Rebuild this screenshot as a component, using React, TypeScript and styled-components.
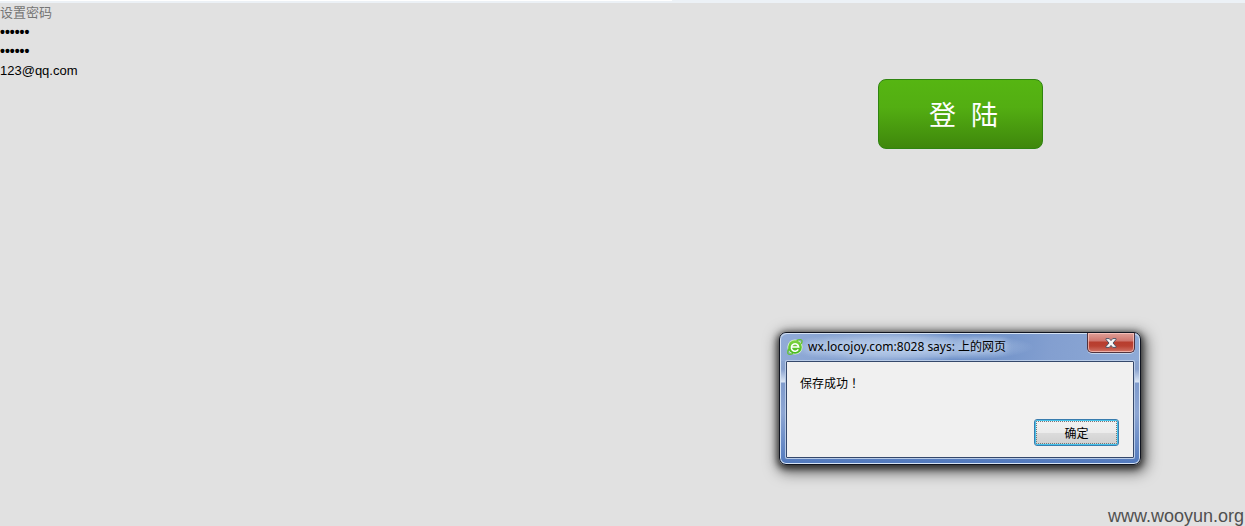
import React, { useState } from 'react';
import styled, { createGlobalStyle } from 'styled-components';

const GlobalStyle = createGlobalStyle`
  *, *::before, *::after { box-sizing: border-box; }
  body {
    margin: 0;
    background: #e1e1e1;
    color: #000;
    font-family: "Liberation Sans", "Noto Sans CJK SC", sans-serif;
    font-size: 13px;
  }
`;

const Page = styled.div`
  position: relative;
  min-height: 100vh;
  display: flex;
  flex-direction: column;
  background: #e1e1e1;
  overflow: hidden;
`;

const TopStrip = styled.div`
  height: 3px;
  background: #ecf1f6;
  &::before {
    content: "";
    display: block;
    width: 54%;
    height: 1px;
    background: #fff;
  }
`;

const Form = styled.form`
  flex: 1;
  display: flex;
  justify-content: space-between;
  align-items: flex-start;
`;

const Fields = styled.div`
  display: flex;
  flex-direction: column;
  width: 200px;
`;

const Heading = styled.label`
  height: 20px;
  line-height: 20px;
  color: #757575;
`;

const Field = styled.input`
  height: 19px;
  padding: 0;
  border: 0;
  outline: 0;
  background: transparent;
  color: #000;
  font: 13px/19px "Liberation Sans", sans-serif;
`;

const PasswordField = styled(Field)`
  font: 700 14px/19px "Liberation Sans", sans-serif;
`;

const LoginButton = styled.button`
  display: flex;
  align-items: center;
  justify-content: center;
  gap: 15px;
  width: 165px;
  height: 70px;
  margin: 76px 202px 0 0;
  padding: 0 0 0 6px;
  border: 1px solid #2f8410;
  border-radius: 8px;
  background: linear-gradient(#56b512, #53ae12 40%, #3f870c);
  color: #fff;
  font: 27px/36px "Noto Sans CJK SC", sans-serif;
`;

const DialogWindow = styled.div`
  position: absolute;
  top: 332px;
  right: 104px;
  width: 362px;
  padding: 0 6px 6px;
  border: 1px solid #10141f;
  border-radius: 7px;
  background: linear-gradient(#8ea8d3 0, #8ea8d3 20px, #87a0cd 36px, #dbe6f4 49px, #7f9bcc 50px, #8da6d3 80px, #5179bd);
  box-shadow: inset 0 0 0 1px #d5e2f3, 0 2px 6px 2px rgba(0, 0, 0, 0.6), 2px 4px 14px 4px rgba(0, 0, 0, 0.5);
`;

const TitleBar = styled.div`
  display: flex;
  align-items: flex-start;
  height: 28px;
  margin: 0 -5px;
  padding: 0 4px 0 6px;
  border-radius: 6px 6px 0 0;
  background:
    radial-gradient(ellipse 125px 16px at 128px 14px, rgba(200, 217, 241, 0.8), rgba(200, 217, 241, 0.5) 60%, transparent),
    linear-gradient(100deg, #91abd7 0, #7d9bcd 30%, #5b81c0 48%, #7092c9 58%, #839fd0 75%, #8eaad6);
  box-shadow: inset 0 1px 0 #d5e2f3;
`;

const Title = styled.h1`
  flex: 1;
  margin: 5px 0 0 5px;
  font: 400 12px/18px "Noto Sans", "Noto Sans CJK SC", sans-serif;
  text-shadow: 0 0 6px #c8d9f1, 0 0 8px #c8d9f1;
  white-space: nowrap;
`;

const BrowserIcon = styled.svg`
  width: 16px;
  height: 16px;
  margin-top: 6px;
`;

const CloseButton = styled.button`
  display: grid;
  place-items: center;
  width: 48px;
  height: 20px;
  padding: 0;
  border: 1px solid #50333e;
  border-top: 0;
  border-radius: 0 0 5px 5px;
  background: linear-gradient(#dfa099, #ce756d 8px, #b73d2e 9px, #b94132 13px, #d17568);
  box-shadow: inset 0 0 0 1px rgba(255, 210, 205, 0.65), 0 1px 0 #c6d5ec;
`;

const DialogBody = styled.div`
  display: flex;
  flex-direction: column;
  justify-content: space-between;
  height: 97px;
  padding: 12px 14px 11px 13px;
  border: 1px solid #35486b;
  border-radius: 1px;
  background: #f0f0f0;
  box-shadow: 0 0 0 1px #b8cbe7;
`;

const Message = styled.p`
  margin: 0;
  font: 12px/18px "Noto Sans CJK TC", sans-serif;
`;

const ConfirmButton = styled.button`
  align-self: flex-end;
  width: 85px;
  height: 27px;
  padding: 0;
  border: 1px solid #397cae;
  border-radius: 3px;
  outline: 1px dotted #777;
  outline-offset: -3px;
  background: linear-gradient(#f2f2f2, #ebebeb 50%, #dcdcdc 51%, #cfcfcf);
  box-shadow: inset 0 0 0 1px #46c4ec;
  color: #000;
  font: 12px/18px "Noto Sans CJK SC", sans-serif;
`;

const Watermark = styled.footer`
  align-self: flex-end;
  height: 20px;
  padding-right: 1px;
  color: #505050;
  font-size: 18px;
  line-height: 20px;
`;

export default function App() {
  const [open, setOpen] = useState(true);
  return (
    <>
      <GlobalStyle />
      <Page>
        <TopStrip />
        <Form onSubmit={(event) => event.preventDefault()}>
          <Fields>
            <Heading htmlFor="password">设置密码</Heading>
            <PasswordField id="password" type="password" defaultValue="123456" />
            <PasswordField type="password" aria-label="确认密码" defaultValue="123456" />
            <Field type="email" aria-label="邮箱" defaultValue="123@qq.com" />
          </Fields>
          <LoginButton type="submit">
            <span>登</span>
            <span>陆</span>
          </LoginButton>
        </Form>
        <Watermark>www.wooyun.org</Watermark>

        {open && (
          <DialogWindow role="alertdialog" aria-labelledby="dialog-title" aria-describedby="dialog-message">
            <TitleBar>
              <BrowserIcon viewBox="0 0 16 16" aria-hidden="true">
                <defs>
                  <linearGradient id="leaf" x1="0" y1="0" x2="0" y2="1">
                    <stop offset="0" stopColor="#7fd340" />
                    <stop offset="1" stopColor="#45b81e" />
                  </linearGradient>
                </defs>
                <circle cx="8" cy="8" r="7.6" fill="#d9f2cf" />
                <circle cx="8" cy="8" r="6.8" fill="url(#leaf)" />
                <path d="M11.3 10.3A3.7 3.7 0 1 1 11.7 8H5" fill="none" stroke="#fff" strokeWidth="1.5" />
                <path d="M1.2 15C.3 13 1.2 10.5 3 8.5M14.6 1c.8 1.2.4 2.6-.5 4" fill="none" stroke="#62c52e" strokeWidth="1.3" />
                <path d="M1.2 15c1.4.6 3.2.2 4.8-.6M9.5 1.6c2-.9 4-1.3 5.1-.6" fill="none" stroke="#62c52e" strokeWidth="1.3" />
              </BrowserIcon>
              <Title id="dialog-title">wx.locojoy.com:8028 says: 上的网页</Title>
              <CloseButton type="button" aria-label="关闭" onClick={() => setOpen(false)}>
                <svg width="12" height="10" viewBox="0 0 12 10" aria-hidden="true">
                  <path
                    d="M1 .6h3.3L6 2.6 7.7.6H11v1L8 5l3 3.4v1H7.7L6 7.4l-1.7 2H1v-1L4 5 1 1.6z"
                    fill="#f7f7f7"
                    stroke="#4f5365"
                    strokeWidth="1"
                  />
                </svg>
              </CloseButton>
            </TitleBar>
            <DialogBody>
              <Message id="dialog-message">保存成功！</Message>
              <ConfirmButton type="button" onClick={() => setOpen(false)}>确定</ConfirmButton>
            </DialogBody>
          </DialogWindow>
        )}
      </Page>
    </>
  );
}
